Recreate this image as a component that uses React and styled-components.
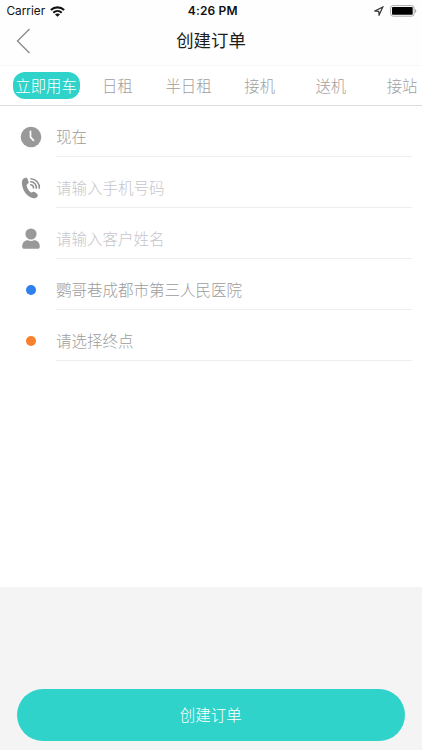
import { useState } from 'react';
import styled, { createGlobalStyle } from 'styled-components';

const GlobalStyle = createGlobalStyle`
  * { box-sizing: border-box; }
  body {
    margin: 0; background: #f4f4f4; overflow: hidden;
    font-family: Inter, "Noto Sans CJK SC", sans-serif;
  }
  button, input { font: inherit; border: 0; padding: 0; background: none; }
`;

const Screen = styled.div`
  display: flex; flex-direction: column;
  width: 422px; height: 750px; overflow: hidden; background: #f4f4f4;
`;

const StatusBar = styled.div`
  display: grid; grid-template-columns: 1fr auto 1fr; align-items: center;
  height: 22px; flex: none; padding: 0 5px 0 6.5px;
  background: #fefefe; color: #111; font-size: 12px; line-height: 22px;
`;

const StatusLeft = styled.div`
  display: flex; align-items: center; gap: 5px; font-size: 11.8px;
`;

const StatusTime = styled.div`
  padding-left: 2px; font-weight: 600; letter-spacing: 0.15px;
`;

const StatusRight = styled.div`
  display: flex; align-items: center; justify-content: flex-end; gap: 6px;
`;

const NavBar = styled.header`
  display: grid; grid-template-columns: 60px 1fr 60px; align-items: center;
  height: 44px; flex: none; padding-bottom: 5px;
  background: #fefefe; border-bottom: 1px solid #f8f8f8;
`;

const BackButton = styled.button`
  display: flex; padding-left: 16px;
`;

const Title = styled.h1`
  margin: 0; text-align: center; color: #1c1c1c;
  font-size: 17.4px; font-weight: 400; line-height: 26px;
`;

const Tabs = styled.nav`
  display: flex; align-items: center; flex: none;
  height: 40px; padding-left: 10.5px; overflow: hidden;
  background: #fff; border-bottom: 1px solid #dcdcdc;
`;

const Tab = styled.button`
  flex: none; width: 67.2px; height: 27px; margin: 0 2px; padding-top: 1px; border-radius: 12px;
  font-size: 15.4px; font-weight: 300; line-height: 27px; text-align: center; white-space: nowrap;
  color: ${p => (p.$active ? '#fff' : '#a0a0a0')};
  background: ${p => (p.$active ? '#2fd3ca' : 'transparent')};
`;

const Form = styled.div`
  flex: none; height: 480.5px; padding-right: 10.5px; background: #fff;
`;

const Row = styled.div`
  display: flex; height: 51px;
`;

const IconCell = styled.div`
  display: flex; align-items: center; justify-content: center;
  width: 56px; flex: none; padding: 10px 0 0 5px;
`;

const Field = styled.div`
  display: flex; align-items: center; flex: 1; padding-top: 14px;
  border-bottom: 1px solid #eee;
  color: #9c9c9c; font-size: 15.5px; font-weight: 300; line-height: 24px;
`;

const Input = styled.input`
  width: 100%; height: 24px; outline: none; color: #9c9c9c;
  &::placeholder { color: #c6c6cb; opacity: 1; }
`;

const Dot = styled.span`
  width: 10px; height: 10px; border-radius: 50%;
  background: ${p => p.$color};
`;

const Footer = styled.footer`
  display: flex; flex-direction: column; justify-content: flex-end; flex: 1;
  padding: 0 17px 9.5px 16.5px;
`;

const SubmitButton = styled.button`
  height: 51.5px; padding-top: 2px; border-radius: 26px; background: #2fd3ca; color: #fff;
  font-size: 15.5px; font-weight: 300; line-height: 49px;
`;

const WifiIcon = () => (
  <svg width="15" height="11" viewBox="0 0 15 11" fill="none" stroke="#111" strokeWidth="2.1">
    <path d="M.9 4.1C4.600.5 10.400.5 14.100 4.100" />
    <path d="M3.3 6.700c2.400-2.300 6-2.300 8.400 0" />
    <path d="M7.500 10.800L5 8.400c1.400-1.200 3.600-1.200 5 0z" fill="#111" stroke="none" />
  </svg>
);

const LocationIcon = () => (
  <svg width="10" height="10" viewBox="0 0 10 10" fill="none" stroke="#333" strokeWidth="1.200" strokeLinejoin="miter">
    <path d="M8.800 1L1 5l3.700.4.4 3.600z" />
  </svg>
);

const BatteryIcon = () => (
  <svg width="27" height="12" viewBox="0 0 27 12">
    <rect x="0.600" y="0.600" width="23.500" height="10.600" rx="2.500" fill="#fff" stroke="#aaa" />
    <rect x="2" y="2" width="20.700" height="7.800" rx="0.800" fill="#000" />
    <path d="M25 4v4c1.800-.6 1.800-3.400 0-4z" fill="#aaa" />
  </svg>
);

const BackIcon = () => (
  <svg width="15" height="26" viewBox="0 0 15 26" fill="none" stroke="#8c8c8c" strokeWidth="1.4">
    <path d="M13.5 1L1.5 13l12 12" />
  </svg>
);

const ClockIcon = () => (
  <svg width="22" height="22" viewBox="0 0 22 22">
    <circle cx="11" cy="11" r="10.3" fill="#999" />
    <path d="M10.5 5.3v5.800l3 3.300" fill="none" stroke="#fff" strokeWidth="1.700" strokeLinecap="round" strokeLinejoin="round" />
  </svg>
);

const PhoneIcon = () => (
  <svg width="22" height="22" viewBox="0 0 22 22" fill="none">
    <path
      d="M4.500 1c1.500-.7 2.700-.1 3.200 1.200l.8 2.500c.3 1-.1 1.800-.9 2.300-.8.5-1.200 1-.9 2 .6 2.500 1.900 4.400 3.700 5.900.8.7 1.500.7 2.300.2.8-.5 1.700-.4 2.400.2l1.900 1.500c1 .9 1.100 2 .3 2.900-1.500 1.700-3.900 2-6.200.9C5.900 18.100 2.400 12.500 1.900 6.400 1.700 3.700 2.700 1.900 4.500 1z"
      fill="#929292"
    />
    <g stroke="#929292" strokeWidth="1.600" strokeLinecap="round">
      <path d="M11 1.800c4.900.2 8.800 4.500 8.300 9.400" />
      <path d="M10.800 4.800c3.300.1 5.900 3 5.500 6.300" />
      <path d="M10.700 7.700c1.700.2 2.900 1.500 2.800 3.200" />
    </g>
  </svg>
);

const UserIcon = () => (
  <svg width="22" height="22" viewBox="0 0 22 22" fill="#999">
    <circle cx="11" cy="6" r="5.600" />
    <path d="M2.200 18.500c0-4 2.400-6.300 5.700-6.300 1.900 1.100 4.300 1.100 6.200 0 3.300 0 5.700 2.300 5.700 6.300 0 1.500-.7 2.300-2.300 2.300h-13c-1.600 0-2.300-.8-2.300-2.300z" />
  </svg>
);

const TABS = ['立即用车', '日租', '半日租', '接机', '送机', '接站'];

export default function App() {
  const [activeTab, setActiveTab] = useState(0);
  const [phone, setPhone] = useState('');
  const [name, setName] = useState('');

  return (
    <Screen>
      <GlobalStyle />
      <StatusBar>
        <StatusLeft>Carrier <WifiIcon /></StatusLeft>
        <StatusTime>4:26 PM</StatusTime>
        <StatusRight><LocationIcon /><BatteryIcon /></StatusRight>
      </StatusBar>

      <NavBar>
        <BackButton type="button"><BackIcon /></BackButton>
        <Title>创建订单</Title>
      </NavBar>

      <Tabs>
        {TABS.map((label, i) => (
          <Tab key={label} type="button" $active={i === activeTab} onClick={() => setActiveTab(i)}>
            {label}
          </Tab>
        ))}
      </Tabs>

      <Form>
        <Row>
          <IconCell><ClockIcon /></IconCell>
          <Field>现在</Field>
        </Row>
        <Row>
          <IconCell><PhoneIcon /></IconCell>
          <Field>
            <Input type="tel" placeholder="请输入手机号码" value={phone} onChange={e => setPhone(e.target.value)} />
          </Field>
        </Row>
        <Row>
          <IconCell><UserIcon /></IconCell>
          <Field>
            <Input placeholder="请输入客户姓名" value={name} onChange={e => setName(e.target.value)} />
          </Field>
        </Row>
        <Row>
          <IconCell><Dot $color="#2d80ed" /></IconCell>
          <Field>鹦哥巷成都市第三人民医院</Field>
        </Row>
        <Row>
          <IconCell><Dot $color="#f9802d" /></IconCell>
          <Field>请选择终点</Field>
        </Row>
      </Form>

      <Footer>
        <SubmitButton type="button">创建订单</SubmitButton>
      </Footer>
    </Screen>
  );
}
